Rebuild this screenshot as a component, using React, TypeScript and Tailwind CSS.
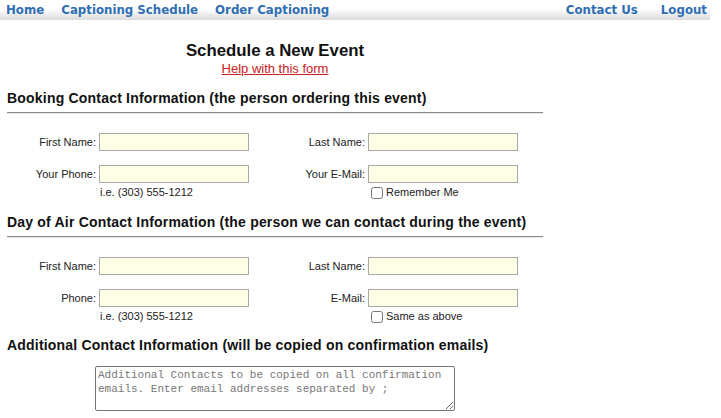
import React, { useState } from "react";

const navFont = { fontFamily: '"DejaVu Sans Condensed", "DejaVu Sans", Verdana, sans-serif' };

interface RowProps {
     left: string
     right: string
     hintLeft: string
     checkLabel: string
}

const Field: React.FC = () => {
     const [value, setValue] = useState('')
     return (
          <input
               value={value}
               onChange={(e) => setValue(e.target.value)}
               className="ml-[3px] w-[150px] h-[18px] bg-[#fefee6] border border-[#a9a9a9] outline-none text-[11px] px-[2px]"
          />
     )
}

const ContactRows: React.FC<{ rows: RowProps }> = ({ rows }) => {
     const [checked, setChecked] = useState(false)
     return (
          <div className="mt-[19px] text-[11px] text-[#222]">
               <div className="flex items-center h-[18px]">
                    <span className="w-[89px] text-right">First Name:</span>
                    <Field />
                    <span className="w-[116px] text-right">{rows.left}</span>
                    <Field />
               </div>
               <div className="flex items-center h-[18px] mt-[14px]">
                    <span className="w-[89px] text-right">{rows.hintLeft}</span>
                    <Field />
                    <span className="w-[116px] text-right">{rows.right}</span>
                    <Field />
               </div>
               <div className="flex items-center h-[13px] mt-[3px] leading-[13px]">
                    <span className="ml-[93px] w-[268px]">i.e. (303) 555-1212</span>
                    <input
                         type="checkbox"
                         checked={checked}
                         onChange={(e) => setChecked(e.target.checked)}
                         className="m-0 ml-[3px] w-[12px] h-[12px]"
                    />
                    <span className="ml-[3px]">{rows.checkLabel}</span>
               </div>
          </div>
     )
}

const SectionHeading: React.FC<{ title: string; className?: string }> = ({ title, className }) => (
     <div className={className}>
          <h2 className="text-[14px] leading-[17px] font-bold tracking-[0.2px] text-[#111]">{title}</h2>
          <div className="mt-[5px] border-t border-[#8c8c8c] border-b border-b-[#e6e6e6]" />
     </div>
)

export default function App() {
     const [extra, setExtra] = useState('')

     return (
          <div className="w-[721px] h-[418px] bg-white overflow-hidden" style={{ fontFamily: '"Liberation Sans", Arial, sans-serif' }}>
               {/* Nav bar */}
               <div className="w-[710px] h-[20px] flex items-center justify-between bg-linear-to-b from-white from-45% to-[#dadada] text-[13.1px] font-bold text-[#2f6eb3]" style={navFont}>
                    <div className="flex gap-[17px] pl-[6px]">
                         <a href="#">Home</a>
                         <a href="#">Captioning Schedule</a>
                         <a href="#">Order Captioning</a>
                    </div>
                    <div className="flex gap-[23px] pr-[3px]">
                         <a href="#">Contact Us</a>
                         <a href="#">Logout</a>
                    </div>
               </div>

               <div className="w-[550px] px-[7px]">
                    <div className="text-center mt-[21px]">
                         <h1 className="text-[16.8px] leading-[20px] font-bold text-[#111]">Schedule a New Event</h1>
                         <a href="#" className="block text-[13px] leading-[15px] text-[#cc2020] underline">Help with this form</a>
                    </div>

                    <SectionHeading className="mt-[14px]" title="Booking Contact Information (the person ordering this event)" />
                    <ContactRows rows={{ left: 'Last Name:', right: 'Your E-Mail:', hintLeft: 'Your Phone:', checkLabel: 'Remember Me' }} />

                    <SectionHeading className="mt-[15px]" title="Day of Air Contact Information (the person we can contact during the event)" />
                    <ContactRows rows={{ left: 'Last Name:', right: 'E-Mail:', hintLeft: 'Phone:', checkLabel: 'Same as above' }} />

                    <h2 className="mt-[14px] text-[14px] leading-[17px] font-bold tracking-[0.2px] text-[#111]">Additional Contact Information (will be copied on confirmation emails)</h2>
                    <div className="flex justify-center mt-[12px]">
                         <textarea
                              value={extra}
                              onChange={(e) => setExtra(e.target.value)}
                              placeholder="Additional Contacts to be copied on all confirmation emails. Enter email addresses separated by ;"
                              className="w-[360px] h-[45px] border border-[#767676] rounded-[2px] px-[2px] py-[1px] text-[11px] leading-[14px] placeholder:text-[#777] outline-none"
                              style={{ fontFamily: '"Liberation Mono", "Courier New", monospace' }}
                         />
                    </div>
               </div>
          </div>
     )
}
